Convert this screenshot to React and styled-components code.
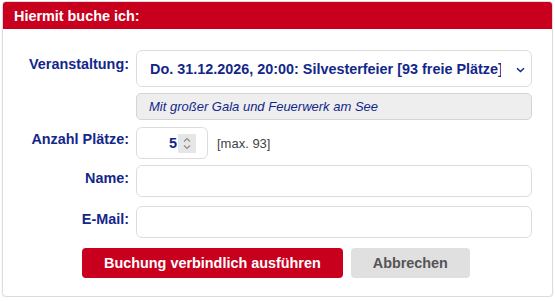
import React from "react";
import styled, { createGlobalStyle } from "styled-components";

const Global = createGlobalStyle`
  html, body { margin: 0; padding: 0; background: #fff; }
  body { font-family: "Liberation Sans", Arial, sans-serif; }
  * { box-sizing: border-box; }
`;

const navy = "#13278a";
const red = "#c8001e";
const boldSize = "14.4px";

const Page = styled.div`
  padding: 1px 2px 0 2px;
  width: 555px;
`;

const Card = styled.section`
  width: 551px;
  border: 1px solid #dcdcdc;
  border-radius: 4px;
  box-shadow: 0 1px 2px rgba(0, 0, 0, 0.08);
  overflow: hidden;
  background: #fff;
`;

const Header = styled.h2`
  margin: 0;
  height: 27px;
  display: flex;
  align-items: center;
  padding-left: 11px;
  background: ${red};
  color: #fff;
  font-size: ${boldSize};
  font-weight: bold;
`;

const Form = styled.form`
  display: grid;
  grid-template-columns: 116px 396px;
  column-gap: 7px;
  padding: 21px 20px 18px 10px;
`;

const Label = styled.label`
  text-align: right;
  font-size: ${boldSize};
  font-weight: bold;
  color: ${navy};
  padding-top: ${(p) => p.$pt ?? 5}px;
  margin-top: ${(p) => p.$mt ?? 0}px;
  white-space: nowrap;
`;

const FieldCol = styled.div`
  display: flex;
  flex-direction: column;
  gap: 6px;
  margin-top: ${(p) => p.$mt ?? 0}px;
`;

const SelectWrap = styled.div`
  position: relative;
  height: 37px;
`;

const Select = styled.select`
  appearance: none;
  -webkit-appearance: none;
  width: 100%;
  height: 100%;
  border: 1px solid #dcdcdc;
  border-radius: 6px;
  background: #fff;
  padding: 0 30px 0 13px;
  font-family: inherit;
  font-size: ${boldSize};
  font-weight: bold;
  color: ${navy};
  outline: none;
`;

const Chevron = styled.svg`
  position: absolute;
  right: 7px;
  top: 17px;
  pointer-events: none;
`;

const Note = styled.div`
  height: 27px;
  display: flex;
  align-items: center;
  padding-left: 12px;
  background: #eeeeee;
  border: 1px solid #d4d4d4;
  border-radius: 5px;
  font-size: 13px;
  font-style: italic;
  color: ${navy};
`;

const NumberLine = styled.div`
  display: flex;
  align-items: center;
  gap: 9px;
  margin-top: ${(p) => p.$mt ?? 0}px;
`;

const NumberBox = styled.div`
  width: 72px;
  height: 32px;
  border: 1px solid #dcdcdc;
  border-radius: 6px;
  display: flex;
  align-items: center;
  justify-content: flex-end;
  padding-right: 11px;
  gap: 1px;
`;

const NumberValue = styled.input`
  width: 30px;
  border: none;
  outline: none;
  text-align: right;
  font-family: inherit;
  font-size: ${boldSize};
  font-weight: bold;
  color: ${navy};
  padding: 0;
  background: transparent;
`;

const Spinner = styled.span`
  width: 18px;
  height: 19px;
  background: #e6e6e6;
  display: flex;
  align-items: center;
  justify-content: center;
`;

const Hint = styled.span`
  font-size: 13px;
  color: #444;
`;

const TextInput = styled.input`
  height: 32px;
  width: 100%;
  border: 1px solid #dcdcdc;
  border-radius: 6px;
  padding: 0 10px;
  font-family: inherit;
  font-size: 14px;
  color: ${navy};
  outline: none;
  margin-top: ${(p) => p.$mt ?? 0}px;
`;

const Actions = styled.div`
  grid-column: 1 / -1;
  display: flex;
  justify-content: center;
  gap: 8px;
  padding-left: 7px;
  margin-top: 10px;
`;

const Button = styled.button`
  height: 30px;
  padding: 0 22px;
  border: none;
  border-radius: 4px;
  font-family: inherit;
  font-size: ${boldSize};
  font-weight: bold;
  background: ${(p) => (p.$primary ? red : "#e0e0e0")};
  color: ${(p) => (p.$primary ? "#fff" : "#555")};
  cursor: pointer;
`;

export default function App() {
  return (
    <>
      <Global />
      <Page>
        <Card>
          <Header>Hiermit buche ich:</Header>
          <Form onSubmit={(e) => e.preventDefault()}>
            <Label $pt={6}>Veranstaltung:</Label>
            <FieldCol>
              <SelectWrap>
                <Select defaultValue="1">
                  <option value="1">
                    Do. 31.12.2026, 20:00: Silvesterfeier [93 freie Plätze]
                  </option>
                </Select>
                <Chevron width="9" height="6" viewBox="0 0 9 6">
                  <path d="M1 1.2 L4.5 4.6 L8 1.2" fill="none" stroke={navy} strokeWidth="1.4" />
                </Chevron>
              </SelectWrap>
              <Note>Mit großer Gala und Feuerwerk am See</Note>
            </FieldCol>

            <Label $mt={7} $pt={4}>Anzahl Plätze:</Label>
            <NumberLine $mt={7}>
              <NumberBox>
                <NumberValue type="text" defaultValue="5" />
                <Spinner>
                  <svg width="10" height="15" viewBox="0 0 10 15">
                    <path d="M2 5.5 L5 2.5 L8 5.5" fill="none" stroke="#8a8a8a" strokeWidth="1.1" />
                    <path d="M2 9.5 L5 12.5 L8 9.5" fill="none" stroke="#8a8a8a" strokeWidth="1.1" />
                  </svg>
                </Spinner>
              </NumberBox>
              <Hint>[max. 93]</Hint>
            </NumberLine>

            <Label $mt={6}>Name:</Label>
            <TextInput $mt={6} type="text" />

            <Label $mt={9}>E-Mail:</Label>
            <TextInput $mt={9} type="email" />

            <Actions>
              <Button $primary type="submit">Buchung verbindlich ausführen</Button>
              <Button type="button">Abbrechen</Button>
            </Actions>
          </Form>
        </Card>
      </Page>
    </>
  );
}
